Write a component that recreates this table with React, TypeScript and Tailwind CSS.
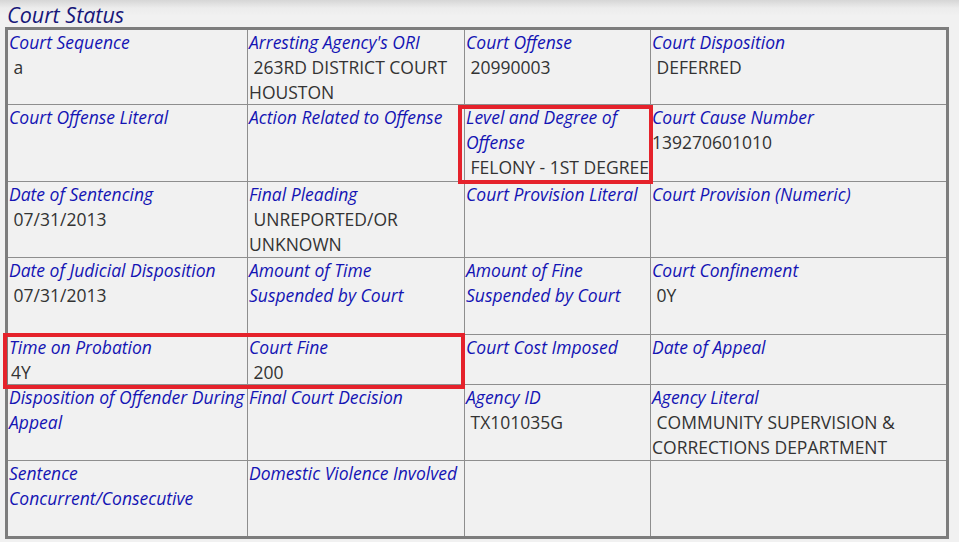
const NB = "\u00a0";

type Cell = { label: string; value?: string; vcls?: string };

const ROWS: { h: string; cells: Cell[] }[] = [
  {
    h: "h-[74px]",
    cells: [
      { label: "Court Sequence", value: NB + "a" },
      { label: "Arresting Agency's ORI", value: NB + "263RD DISTRICT COURT HOUSTON" },
      { label: "Court Offense", value: NB + "20990003" },
      { label: "Court Disposition", value: NB + "DEFERRED" },
    ],
  },
  {
    h: "h-[76px]",
    cells: [
      { label: "Court Offense Literal" },
      { label: "Action Related to Offense" },
      { label: "Level and Degree of Offense", value: NB + "FELONY - 1ST DEGREE" },
      { label: "Court Cause Number", value: "139270601010" },
    ],
  },
  {
    h: "h-[75px]",
    cells: [
      { label: "Date of Sentencing", value: NB + "07/31/2013" },
      { label: "Final Pleading", value: NB + "UNREPORTED/OR UNKNOWN" },
      { label: "Court Provision Literal" },
      { label: "Court Provision (Numeric)" },
    ],
  },
  {
    h: "h-[76px]",
    cells: [
      { label: "Date of Judicial Disposition", value: NB + "07/31/2013" },
      { label: "Amount of Time\nSuspended by Court" },
      { label: "Amount of Fine\nSuspended by Court" },
      { label: "Court Confinement", value: NB + "0Y" },
    ],
  },
  {
    h: "h-[49px]",
    cells: [
      { label: "Time on Probation", value: "4Y", vcls: "pl-[2px]" },
      { label: "Court Fine", value: NB + "200" },
      { label: "Court Cost Imposed" },
      { label: "Date of Appeal" },
    ],
  },
  {
    h: "h-[75px]",
    cells: [
      { label: "Disposition of Offender During Appeal" },
      { label: "Final Court Decision" },
      { label: "Agency ID", value: NB + "TX101035G" },
      { label: "Agency Literal", value: NB + "COMMUNITY SUPERVISION & CORRECTIONS DEPARTMENT" },
    ],
  },
  {
    h: "h-[75px]",
    cells: [
      { label: "Sentence Concurrent/Consecutive" },
      { label: "Domestic Violence Involved" },
      { label: "" },
      { label: "" },
    ],
  },
];

export default function App() {
  return (
    <div
      className="relative w-[959px] h-[542px] overflow-hidden bg-[linear-gradient(to_bottom,#d6d6d6_0px,#ececec_8px,#f1f1f1_16px)] pl-[5px] text-[17.5px] leading-[25px]"
      style={{ fontFamily: '"Open Sans", "Noto Sans", sans-serif' }}
    >
      <h2 className="h-[27px] pl-[2px] text-[21.5px] leading-[29px] italic font-normal text-[#17177a]">
        Court Status
      </h2>
      <div className="w-[944px] border-[3px] border-[#7d7d7d]">
        <div className="grid grid-cols-[239px_216px_185px_295px] gap-px bg-[#8e8e8e]">
          {ROWS.map((row, ri) =>
            row.cells.map((c, ci) => (
              <div key={ri + "-" + ci} className={`${row.h} bg-[#f1f1f1] pl-px overflow-hidden`}>
                {c.label && <div className="italic whitespace-pre-line text-[#1414b4]">{c.label}</div>}
                {c.value && <div className={`text-[#333333] ${c.vcls ?? ""}`}>{c.value}</div>}
              </div>
            ))
          )}
        </div>
      </div>

      {/* annotation boxes */}
      <div className="absolute left-[458px] top-[105px] w-[195px] h-[79px] border-4 border-[#e5222b]" />
      <div className="absolute left-[3px] top-[333px] w-[462px] h-[56px] border-4 border-[#e5222b]" />
    </div>
  );
}
